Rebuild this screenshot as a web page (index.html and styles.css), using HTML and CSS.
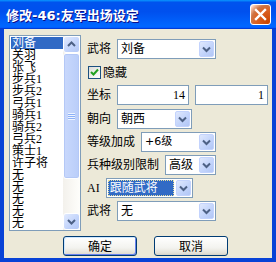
FILE: index.html
```html
<!DOCTYPE html>
<html>
<head>
  <title>修改-46:友军出场设定</title>
  <link rel="stylesheet" href="styles.css">
</head>
<body>
  <div class="window">
    <div class="titlebar">
      <span class="title">修改-46:友军出场设定</span>
      <div class="close">
        <svg width="13" height="13" viewBox="0 0 13 13">
          <path d="M2 2 L11 11 M11 2 L2 11" stroke="#fff" stroke-width="2.4" stroke-linecap="square"/>
        </svg>
      </div>
    </div>

    <div class="content">
      <div class="main">
        <div class="listbox">
          <ul class="items">
            <li class="selected">刘备</li>
            <li>关羽</li>
            <li>张飞</li>
            <li>步兵1</li>
            <li>步兵2</li>
            <li>弓兵1</li>
            <li>骑兵1</li>
            <li>骑兵2</li>
            <li>弓兵2</li>
            <li>策士1</li>
            <li>许子将</li>
            <li>无</li>
            <li>无</li>
            <li>无</li>
            <li>无</li>
            <li>无</li>
          </ul>
          <div class="scrollbar">
            <div class="sb-btn">
              <svg width="15" height="15" viewBox="0 0 15 15"><path d="M4 9 L7.5 5.5 L11 9" fill="none" stroke="#4d6185" stroke-width="2"/></svg>
            </div>
            <div class="sb-thumb">
              <div class="grip"></div>
            </div>
            <div class="sb-track"></div>
            <div class="sb-btn">
              <svg width="15" height="15" viewBox="0 0 15 15"><path d="M4 6 L7.5 9.5 L11 6" fill="none" stroke="#4d6185" stroke-width="2"/></svg>
            </div>
          </div>
        </div>

        <div class="form">
          <div class="row">
            <span class="label">武将</span>
            <div class="combo w99"><span class="val">刘备</span><span class="drop"><svg width="13" height="14" viewBox="0 0 13 14"><path d="M3 5.5 L6.5 9 L10 5.5" fill="none" stroke="#4d6185" stroke-width="2"/></svg></span></div>
          </div>
          <div class="row">
            <span class="check">
              <svg width="11" height="11" viewBox="0 0 11 11"><path d="M2 5 L4.5 7.5 L9 2.5" fill="none" stroke="#21a121" stroke-width="2"/></svg>
            </span>
            <span class="check-label">隐藏</span>
          </div>
          <div class="row">
            <span class="label">坐标</span>
            <div class="field w72">14</div>
            <div class="field w73">1</div>
          </div>
          <div class="row">
            <span class="label">朝向</span>
            <div class="combo w75"><span class="val">朝西</span><span class="drop"><svg width="13" height="14" viewBox="0 0 13 14"><path d="M3 5.5 L6.5 9 L10 5.5" fill="none" stroke="#4d6185" stroke-width="2"/></svg></span></div>
          </div>
          <div class="row">
            <span class="label">等级加成</span>
            <div class="combo w75"><span class="val sans">+6级</span><span class="drop"><svg width="13" height="14" viewBox="0 0 13 14"><path d="M3 5.5 L6.5 9 L10 5.5" fill="none" stroke="#4d6185" stroke-width="2"/></svg></span></div>
          </div>
          <div class="row">
            <span class="label">兵种级别限制</span>
            <div class="combo w51"><span class="val">高级</span><span class="drop"><svg width="13" height="14" viewBox="0 0 13 14"><path d="M3 5.5 L6.5 9 L10 5.5" fill="none" stroke="#4d6185" stroke-width="2"/></svg></span></div>
          </div>
          <div class="row">
            <span class="label">AI</span>
            <div class="combo w87"><span class="val focused">跟随武将</span><span class="drop"><svg width="13" height="14" viewBox="0 0 13 14"><path d="M3 5.5 L6.5 9 L10 5.5" fill="none" stroke="#4d6185" stroke-width="2"/></svg></span></div>
          </div>
          <div class="row">
            <span class="label">武将</span>
            <div class="combo w99"><span class="val">无</span><span class="drop"><svg width="13" height="14" viewBox="0 0 13 14"><path d="M3 5.5 L6.5 9 L10 5.5" fill="none" stroke="#4d6185" stroke-width="2"/></svg></span></div>
          </div>
        </div>
      </div>

      <div class="buttons">
        <button class="btn default">确定</button>
        <button class="btn">取消</button>
      </div>
    </div>
  </div>
</body>
</html>
```

FILE: styles.css
```css
body {
  margin: 0;
  padding: 0;
  font-family: "Liberation Serif", "Noto Sans CJK SC", serif;
  font-size: 12px;
  color: #000;
}

.window {
  width: 276px;
  height: 262px;
  box-sizing: border-box;
  background-color: #0842d6;
  padding: 0 4px 4px;
  display: flex;
  flex-direction: column;
}

/* title bar */
.titlebar {
  height: 29px;
  margin: 0 -4px;
  padding: 0 5px 0 6px;
  display: flex;
  align-items: center;
  justify-content: space-between;
  background: linear-gradient(180deg, #0997ff, #0053ee 8%, #0050ee 40%, #0066ff 88%, #0066ff 93%, #005bff 95%, #003dd7 96%, #003dd7);
}

.title {
  color: #fff;
  font-family: "DejaVu Sans", "Noto Sans CJK SC", sans-serif;
  font-weight: bold;
  font-size: 13px;
  letter-spacing: 0;
  text-shadow: 1px 1px #0f1089;
}

.close {
  width: 21px;
  height: 21px;
  box-sizing: border-box;
  border: 1px solid #fff;
  border-radius: 3px;
  background: radial-gradient(circle at 90% 90%, #cc4600 0%, #dc6527 55%, #cd7546 70%, #ffccb2 90%, #fff 100%);
  display: flex;
  align-items: center;
  justify-content: center;
}

/* dialog body */
.content {
  flex: 1;
  background-color: #ece9d8;
  padding: 6px 0 0 5px;
}

.main {
  display: flex;
  gap: 6px;
}

.listbox {
  width: 72px;
  height: 196px;
  box-sizing: border-box;
  border: 1px solid #7f9db9;
  background-color: #fff;
  display: flex;
}

.items {
  list-style: none;
  margin: 0;
  padding: 1px 0 0 1px;
  width: 52px;
}

.items li {
  height: 12px;
  line-height: 12px;
  padding-left: 1px;
  white-space: nowrap;
}

.items li.selected {
  background-color: #316ac5;
  color: #fff;
}

.scrollbar {
  width: 17px;
  display: flex;
  flex-direction: column;
  background: linear-gradient(90deg, #f3f1ec, #fefefb);
}

.sb-btn {
  height: 17px;
  box-sizing: border-box;
  border: 1px solid #fff;
  border-radius: 3px;
  background: linear-gradient(135deg, #e1eafe, #c1d3fb 60%, #b4c8f6);
  display: flex;
  align-items: center;
  justify-content: center;
}

.sb-thumb {
  height: 126px;
  box-sizing: border-box;
  border: 1px solid #fff;
  border-radius: 3px;
  background: linear-gradient(90deg, #c9d8fc, #c1d3fb 50%, #b9cdf9);
  box-shadow: inset 0 0 0 1px #b4c8f6;
  display: flex;
  align-items: center;
  justify-content: center;
}

.grip {
  width: 7px;
  height: 7px;
  background: repeating-linear-gradient(180deg, #eef4fe 0, #eef4fe 1px, #8cb0f8 1px, #8cb0f8 2px);
}

.sb-track {
  flex: 1;
}

/* right column */
.form {
  margin-top: 4px;
  display: flex;
  flex-direction: column;
  gap: 3.2px;
}

.row {
  height: 20px;
  display: flex;
  align-items: center;
  gap: 6px;
  white-space: nowrap;
}

.label {
  line-height: 20px;
}

.combo {
  height: 20px;
  box-sizing: border-box;
  border: 1px solid #7f9db9;
  background-color: #fff;
  padding: 1px;
  display: flex;
}

.combo .val {
  flex: 1;
  margin-right: 2px;
  padding-left: 2px;
  line-height: 16px;
  overflow: hidden;
}

.combo .val.sans {
  font-family: "DejaVu Sans", "Noto Sans CJK SC", sans-serif;
  font-size: 11px;
}

.combo .val.focused {
  background-color: #316ac5;
  color: #fff;
  outline: 1px dotted #e8e0a0;
  outline-offset: -1px;
}

.drop {
  width: 15px;
  height: 16px;
  box-sizing: border-box;
  border: 1px solid #c3d3fd;
  border-radius: 2px;
  background: linear-gradient(135deg, #dfe8fd, #c1d3fb 60%, #b1c6f5);
  display: flex;
  align-items: center;
  justify-content: center;
}

.w99 { width: 99px; }
.w87 { width: 87px; }
.w75 { width: 75px; }
.w73 { width: 73px; }
.w72 { width: 72px; }
.w51 { width: 51px; }

.field {
  height: 20px;
  box-sizing: border-box;
  border: 1px solid #7f9db9;
  background-color: #fff;
  text-align: right;
  padding-right: 3px;
  line-height: 18px;
}

.check {
  width: 13px;
  height: 13px;
  box-sizing: border-box;
  margin-left: 1px;
  border: 1px solid #1c5180;
  background: linear-gradient(135deg, #dcdcd7, #fff);
  display: flex;
  align-items: center;
  justify-content: center;
}

.row .check-label {
  margin-left: -4px;
}

/* buttons */
.buttons {
  margin-top: 5px;
  padding-left: 54px;
  display: flex;
  gap: 17px;
}

.btn {
  width: 74px;
  height: 20px;
  padding: 0;
  border: 1px solid #003c74;
  border-radius: 3px;
  background: linear-gradient(180deg, #fff, #f3f3ef 60%, #e3e0d6 90%, #d6d0c5);
  font-family: "Liberation Serif", "Noto Sans CJK SC", serif;
  font-size: 12px;
  color: #000;
}

.btn.default {
  box-shadow: inset -1px -1px #6982ee, inset 1px 1px #cee7ff;
}
```
